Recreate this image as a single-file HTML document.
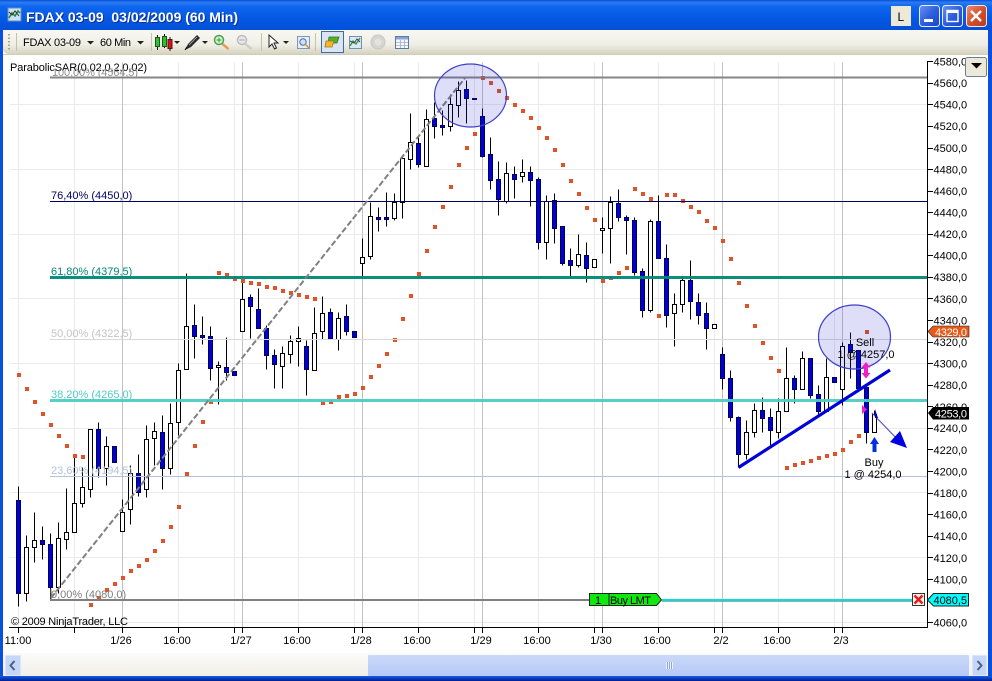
<!DOCTYPE html>
<html lang="en">
<head>
<meta charset="utf-8">
<title>FDAX 03-09 03/02/2009 (60 Min)</title>
<style>
html,body{margin:0;padding:0;background:#fff;width:992px;height:681px;overflow:hidden}
svg{display:block;position:absolute;left:0;top:0}
text{font-family:"Liberation Sans",Arial,sans-serif;font-size:11px;fill:#000}
</style>
</head>
<body>
<svg width="992" height="681" viewBox="0 0 992 681" xmlns="http://www.w3.org/2000/svg">
<defs>
<linearGradient id="tb" x1="0" y1="0" x2="0" y2="1">
<stop offset="0" stop-color="#0a4fd8"/><stop offset=".08" stop-color="#2a7cf4"/><stop offset=".22" stop-color="#0f66ee"/><stop offset=".6" stop-color="#0558e4"/><stop offset="1" stop-color="#0450d8"/>
</linearGradient>
<linearGradient id="tool" x1="0" y1="0" x2="0" y2="1">
<stop offset="0" stop-color="#f8f7f2"/><stop offset=".6" stop-color="#f0efe6"/><stop offset="1" stop-color="#d6d3bf"/>
</linearGradient>
<linearGradient id="btn" x1="0" y1="0" x2="1" y2="1">
<stop offset="0" stop-color="#6d92ee"/><stop offset=".5" stop-color="#2d5fe0"/><stop offset="1" stop-color="#1c44c4"/>
</linearGradient>
<linearGradient id="cls" x1="0" y1="0" x2="1" y2="1">
<stop offset="0" stop-color="#e9917c"/><stop offset=".5" stop-color="#d5512f"/><stop offset="1" stop-color="#b83a1c"/>
</linearGradient>
<linearGradient id="sb" x1="0" y1="0" x2="0" y2="1">
<stop offset="0" stop-color="#fbfbf8"/><stop offset="1" stop-color="#f0efe8"/>
</linearGradient>
<linearGradient id="th" x1="0" y1="0" x2="0" y2="1">
<stop offset="0" stop-color="#cbd9f9"/><stop offset="1" stop-color="#b5c9f6"/>
</linearGradient>
<linearGradient id="bot" x1="0" y1="0" x2="0" y2="1">
<stop offset="0" stop-color="#1a5fe8"/><stop offset=".4" stop-color="#0a40c8"/><stop offset="1" stop-color="#001f8c"/>
</linearGradient>
</defs>

<!-- window frame -->
<rect x="0" y="0" width="992" height="681" fill="#0a50e0"/>
<rect x="0" y="0" width="992" height="30" fill="url(#tb)"/>
<rect x="0" y="676" width="992" height="5" fill="url(#bot)"/>
<rect x="3" y="30" width="985" height="646" fill="#fff"/>

<!-- title icon -->
<rect x="8" y="8" width="13" height="13" fill="#cfe0f4" stroke="#5f8fc0"/>
<path d="M9 18l3-5 3 3 3-5 2 2" fill="none" stroke="#1f8a2f" stroke-width="1.5"/>
<path d="M9 12l3 3 3-4 4 5" fill="none" stroke="#333" stroke-width="1"/>
<!-- title -->
<text x="27" y="23" font-weight="bold" style="font-size:14px;fill:#0a2f9a" textLength="212" lengthAdjust="spacingAndGlyphs" xml:space="preserve">FDAX 03-09  03/02/2009 (60 Min)</text>
<text x="26" y="22" font-weight="bold" style="font-size:14px;fill:#fff" textLength="212" lengthAdjust="spacingAndGlyphs" xml:space="preserve">FDAX 03-09  03/02/2009 (60 Min)</text>

<!-- window buttons -->
<rect x="891" y="6" width="20" height="20" fill="#ece9d8"/>
<text x="897.5" y="21" style="font-size:12px">L</text>
<rect x="919.5" y="5.5" width="20" height="21" rx="3" fill="url(#btn)" stroke="#e8eefc"/>
<rect x="924" y="19" width="9" height="3" fill="#fff"/>
<rect x="942.5" y="5.5" width="20" height="21" rx="3" fill="url(#btn)" stroke="#e8eefc"/>
<rect x="947" y="10.5" width="11" height="11" fill="none" stroke="#fff" stroke-width="1.4"/>
<rect x="947" y="10" width="11" height="3" fill="#fff"/>
<rect x="966.5" y="5.5" width="20" height="21" rx="3" fill="url(#cls)" stroke="#f0e8e4"/>
<path d="M971 11l10 10M981 11l-10 10" stroke="#fff" stroke-width="2.4"/>

<!-- toolbar -->
<path d="M3 30H988V54H9Q3 54 3 48Z" fill="url(#tool)"/>
<path d="M3 54.5H988" stroke="#cfccb8" stroke-width="1"/>
<path d="M9 34v16" stroke="#a8a590" stroke-width="2" stroke-dasharray="1.5 2"/>
<path d="M16.5 33v18M151.5 33v18M261.5 33v18M315.5 33v18" stroke="#c4c1ac"/>
<text x="23" y="46" textLength="58">FDAX 03-09</text>
<path d="M87 41h7l-3.5 3.5z" fill="#222"/>
<text x="100" y="46" textLength="31">60 Min</text>
<path d="M137 41h7l-3.5 3.5z" fill="#222"/>
<!-- candles icon -->
<path d="M157.5 35v15M164.5 34v14M170 37v14" stroke="#111"/>
<rect x="155.5" y="37.5" width="4" height="9" fill="#2fc02f" stroke="#1a5a1a"/>
<rect x="162.5" y="36.5" width="4" height="10" fill="#2fc02f" stroke="#1a5a1a"/>
<rect x="168" y="39.5" width="4" height="9" fill="#d01818" stroke="#601010"/>
<path d="M174 41h6l-3 3z" fill="#222"/>
<!-- pen icon -->
<path d="M185 50l3-6 9-9 3 3-9 9z" fill="#2a2a2a"/><path d="M189 45l8-8" stroke="#999"/><path d="M185 50l2-3" stroke="#000"/>
<path d="M202 41h6l-3 3z" fill="#222"/>
<!-- magnifiers -->
<circle cx="219" cy="40" r="4.500" fill="#dff5df" stroke="#4aa04a" stroke-width="1.500"/>
<path d="M216.500 40h5M219 37.500v5" stroke="#2a9a2a"/>
<path d="M222.500 44l6 5" stroke="#e09a4a" stroke-width="2.400"/>
<circle cx="242" cy="40" r="4.500" fill="#e8e8e8" stroke="#bdbdbd" stroke-width="1.500"/>
<path d="M239.500 40h5" stroke="#aaa"/>
<path d="M245.500 44l6 5" stroke="#ccc" stroke-width="2.400"/>
<!-- cursor -->
<path d="M269 35v12l3-3 2.500 5 2-1-2.500-5h4z" fill="#fff" stroke="#222"/>
<path d="M283 41h6l-3 3z" fill="#222"/>
<!-- properties -->
<rect x="297.500" y="36.500" width="12" height="12" fill="#e8eef8" stroke="#7a97c0"/>
<circle cx="303" cy="42" r="3.200" fill="#cfe0f4" stroke="#4a6ea0"/>
<path d="M305 44l4 4" stroke="#d08a3a" stroke-width="1.500"/>
<!-- highlighted -->
<rect x="321.500" y="31.500" width="22" height="21" fill="#dbe4f4" stroke="#3a6ea5"/>
<path d="M329 37h10l-2 6h-9z" fill="#52b02a" stroke="#2f7a14" stroke-width=".8"/>
<path d="M326 41h8l-2 6h-7z" fill="#f2b62a" stroke="#a87810" stroke-width=".8"/>
<!-- chart -->
<rect x="349.500" y="36.500" width="12" height="12" fill="#dce8f6" stroke="#6f8fb8"/>
<path d="M350 46l3-5 3 3 4-6" fill="none" stroke="#2a9a3a" stroke-width="1.300"/>
<path d="M350 41l4 2 3-4 3 3" fill="none" stroke="#444"/>
<!-- circle -->
<circle cx="378" cy="42" r="7" fill="#d6d6cf" stroke="#c8c8c0"/>
<circle cx="378" cy="42" r="3.500" fill="#e4e4de"/>
<!-- table -->
<rect x="395.500" y="36.500" width="13" height="12" fill="#f6f6fc" stroke="#5a78a8"/>
<rect x="396" y="37" width="12" height="2.500" fill="#8aa5d0"/>
<path d="M396 42.500h12M396 45.500h12M400.500 40v8M404.500 40v8" stroke="#9ab0d0" stroke-width=".8"/>

<!-- grid -->
<g transform="translate(.5,.5)">
<path d="M9 104H927M9 169H927M9 234H927M9 298H927M9 363H927M9 428H927M9 492H927M9 557H927M9 622H927" stroke="#ebebeb" fill="none"/>
<path d="M18 62V627M74 62V627M178 62V627M234 62V627M298 62V627M354 62V627M418 62V627M474 62V627M538 62V627M594 62V627M658 62V627M714 62V627M778 62V627M834 62V627" stroke="#eaeaea" fill="none"/>
<path d="M122 62V627M242 62V627M362 62V627M482 62V627M602 62V627M722 62V627M842 62V627" stroke="#c2c2c2" fill="none"/>

<!-- candle wicks -->
<path stroke="#000" fill="none" d="M18 486V606M26 535V601M34 512V562M42 526V559M50 533V599M58 522V593M66 488V549M74 455V532M82 467V507M90 429V497M98 422V477M106 436V485M122 499V531M130 465V524M138 454V496M146 425V497M154 422V465M162 415V489M170 403V474M178 363V435M186 273V369M194 304V358M202 316V344M210 326V380M218 361V404M226 337V380M242 280V331M250 294V338M258 288V328M266 325V369M274 349V388M282 346V388M290 335V363M298 326V366M306 340V395M314 307V370M322 296V339M330 308V338M338 312V350M346 304V335M362 238V277M370 202V259M378 207V231M386 192V226M394 193V220M402 155V218M410 113V169M418 135V167M426 109V166M434 102V138M442 110V135M450 94V131M458 81V117M466 80V123M482 108V157M490 137V189M498 161V215M506 162V203M514 166V198M522 159V182M530 166V206M538 177V249M546 195V259M554 193V243M562 226V265M570 248V276M578 234V267M586 242V282M602 217V253M610 196V263M618 189V221M626 215V254M634 217V275M642 268V317M650 219V312M658 195V258M666 244V327M674 293V346M682 276V312M690 260V319M698 293V324M706 302V349M722 347V389M730 370V421M738 416V467M746 420V459M754 403V437M762 397V432M770 408V445M778 398V438M786 347V411M794 375V403M802 351V389M810 358V398M818 385V415M826 358V411M842 342V405M850 332V378M858 350V388M866 385V443M874 410V432"/>
<!-- hollow bodies -->
<path stroke="#000" fill="#fff" d="M24 547h4v46h-4zM32 540h4v7h-4zM56 538h4v49h-4zM64 532h4v7h-4zM72 503h4v29h-4zM80 487h4v16h-4zM88 429h4v60h-4zM104 446h4v22h-4zM120 512h4v19h-4zM128 473h4v36h-4zM144 439h4v50h-4zM152 431h4v7h-4zM168 423h4v45h-4zM176 370h4v52h-4zM184 326h4v43h-4zM216 365h4v2h-4zM240 299h4v32h-4zM280 353h4v13h-4zM288 341h4v13h-4zM296 338h4v3h-4zM312 333h4v37h-4zM320 313h4v18h-4zM336 318h4v21h-4zM360 257h4v6h-4zM368 216h4v40h-4zM392 202h4v16h-4zM400 158h4v44h-4zM408 142h4v17h-4zM424 119h4v47h-4zM448 104h4v22h-4zM456 90h4v15h-4zM504 173h4v28h-4zM520 172h4v4h-4zM544 201h4v41h-4zM576 254h4v11h-4zM592 259h4v8h-4zM600 228h4v2h-4zM608 202h4v26h-4zM648 221h4v89h-4zM672 304h4v9h-4zM680 280h4v24h-4zM712 324h4v4h-4zM744 432h4v22h-4zM752 410h4v22h-4zM776 411h4v21h-4zM784 378h4v33h-4zM800 358h4v31h-4zM824 377h4v34h-4zM840 346h4v43h-4zM872 414h4v18h-4z"/>
<!-- filled bodies -->
<path stroke="#00005a" fill="#0000d0" d="M16 500h4v93h-4zM40 540h4v4h-4zM48 544h4v43h-4zM96 429h4v39h-4zM112 446h4v16h-4zM136 473h4v19h-4zM160 432h4v36h-4zM192 325h4v11h-4zM200 335h4v2h-4zM208 336h4v32h-4zM224 367h4v5h-4zM232 371h4v4h-4zM248 297h4v9h-4zM256 309h4v19h-4zM264 328h4v27h-4zM272 355h4v9h-4zM304 346h4v23h-4zM328 312h4v26h-4zM344 316h4v15h-4zM352 331h4v6h-4zM376 217h4v2h-4zM384 217h4v2h-4zM416 143h4v21h-4zM432 118h4v8h-4zM440 125h4v2h-4zM464 89h4v9h-4zM472 98h4v1h-4zM480 116h4v40h-4zM488 154h4v26h-4zM496 179h4v20h-4zM512 174h4v5h-4zM528 172h4v8h-4zM536 179h4v63h-4zM552 200h4v28h-4zM560 226h4v37h-4zM568 260h4v5h-4zM584 255h4v13h-4zM616 203h4v14h-4zM624 217h4v3h-4zM632 220h4v52h-4zM640 271h4v39h-4zM656 221h4v37h-4zM664 258h4v57h-4zM688 280h4v21h-4zM696 302h4v13h-4zM704 313h4v15h-4zM720 354h4v24h-4zM728 378h4v39h-4zM736 417h4v37h-4zM760 410h4v8h-4zM768 417h4v13h-4zM792 378h4v11h-4zM808 358h4v37h-4zM816 394h4v17h-4zM832 377h4v5h-4zM848 344h4v8h-4zM856 350h4v38h-4zM864 387h4v45h-4z"/>
</g>

<!-- Parabolic SAR dots -->
<path stroke="#e2522a" stroke-width="4" stroke-linecap="square" fill="none" d="M19 375h.01M27 389h.01M35 402h.01M43 414h.01M51 425h.01M59 436h.01M67 446h.01M75 456h.01M83 457h.01M91 605h.01M99 598h.01M107 590h.01M115 584h.01M123 578h.01M131 571h.01M139 566h.01M147 560h.01M155 551h.01M163 541h.01M171 527h.01M179 507h.01M187 474h.01M195 446h.01M203 422h.01M211 402h.01M219 273h.01M227 275h.01M235 279h.01M243 281h.01M251 283h.01M259 284h.01M267 287h.01M275 288h.01M283 291h.01M291 293h.01M299 295h.01M307 297h.01M315 299h.01M323 403h.01M331 402h.01M339 397h.01M347 396h.01M355 394h.01M363 388h.01M371 377h.01M379 366h.01M387 354h.01M395 340h.01M403 319h.01M411 296h.01M419 274h.01M427 251h.01M435 227h.01M443 207h.01M451 187h.01M459 165h.01M467 148h.01M475 134h.01M483 78h.01M491 83h.01M499 91h.01M507 98h.01M515 105h.01M523 111h.01M531 118h.01M539 128h.01M547 138h.01M555 150h.01M563 165h.01M571 181h.01M579 194h.01M587 208h.01M595 220h.01M603 281h.01M611 278h.01M619 273h.01M627 268h.01M635 189h.01M643 194h.01M651 199h.01M659 316h.01M667 195h.01M675 195h.01M683 201h.01M691 207h.01M699 212h.01M707 221h.01M715 228h.01M723 241h.01M731 259h.01M739 283h.01M747 306h.01M755 326h.01M763 343h.01M771 358h.01M779 371h.01M787 468h.01M795 465h.01M803 463h.01M811 461h.01M819 458h.01M827 456h.01M835 454h.01M843 450h.01M851 442h.01M859 436h.01M867 332h.01"/>

<!-- fib lines -->
<path d="M50 77.500H927" stroke="#808080" stroke-width="2" opacity=".95"/>
<path d="M50 201.500H927" stroke="#000060" stroke-width="1"/>
<path d="M50 277.500H927" stroke="#008878" stroke-width="3" opacity=".95"/>
<path d="M50 339.500H927" stroke="#d8d8d8" stroke-width="1"/>
<path d="M50 400.500H927" stroke="#4fcdc4" stroke-width="3" opacity=".95"/>
<path d="M50 476.500H927" stroke="#b4c0dc" stroke-width="1"/>
<path d="M50 600H590" stroke="#808080" stroke-width="2"/>
<path d="M51 598L465 78" stroke="#808080" stroke-width="2" stroke-dasharray="6 2.500" fill="none"/>
<path d="M51 589V600" stroke="#808080" stroke-width="1"/>

<!-- ellipses -->
<ellipse cx="470.500" cy="95.500" rx="36" ry="31.500" fill="#2020d0" fill-opacity=".15" stroke="#4040c8" stroke-width="1.200"/>
<ellipse cx="854.500" cy="337" rx="36" ry="32" fill="#2020d0" fill-opacity=".15" stroke="#4040c8" stroke-width="1.200"/>

<!-- labels -->
<text x="10" y="71" textLength="137">ParabolicSAR(0,02,0,2,0,02)</text>
<text x="52" y="76" style="fill:#909090" textLength="86">100,00% (4564,5)</text>
<text x="51" y="199" style="fill:#000060">76,40% (4450,0)</text>
<text x="51" y="275" style="fill:#008878">61,80% (4379,5)</text>
<text x="51" y="337" style="fill:#c4c4c4">50,00% (4322,5)</text>
<text x="51" y="398" style="fill:#4fcdc4">38,20% (4265,0)</text>
<text x="51" y="474" style="fill:#b4c0dc">23,60% (4194,5)</text>
<text x="51" y="598" style="fill:#808080">0,00% (4080,0)</text>
<text x="11" y="625" textLength="117">© 2009 NinjaTrader, LLC</text>

<!-- trend & arrows -->
<path d="M738.500 467.500L890 370" stroke="#0000d8" stroke-width="3.200" fill="none"/>
<path d="M872 413L899 441" stroke="#5a5ac0" stroke-width="1.200" fill="none"/>
<path d="M907 448L890 442L900 431Z" fill="#0000e0"/>
<path d="M876 409v9h3z" fill="#0000e0" transform="translate(-1,0)"/>
<path d="M870 444l4.500-7 4.500 7h-2.500v8h-4v-8z" fill="#0030e0"/>
<path d="M862 405v9l5-4.500z" fill="#f020d0"/>
<path d="M866 362l4.500 5.500h-2.500v5.500h2.500l-4.500 5.500-4.500-5.500h2.500v-5.500h-2.500z" fill="#f020c8"/>

<text x="865" y="346" text-anchor="middle">Sell</text>
<text x="866" y="358" text-anchor="middle">1 @ 4257,0</text>
<text x="874" y="466" text-anchor="middle">Buy</text>
<text x="873" y="478" text-anchor="middle">1 @ 4254,0</text>

<!-- bottom time axis -->
<path d="M9 627.500H927.500V61" stroke="#000" fill="none"/>
<path stroke="#000" fill="none" d="M18.500 627v6M74.500 627v6M122.500 627v6M178.500 627v6M234.500 627v6M242.500 627v6M298.500 627v6M354.500 627v6M362.500 627v6M418.500 627v6M474.500 627v6M482.500 627v6M538.500 627v6M594.500 627v6M602.500 627v6M658.500 627v6M714.500 627v6M722.500 627v6M778.500 627v6M834.500 627v6M842.500 627v6"/>
<g text-anchor="middle">
<text x="18" y="644">11:00</text><text x="121" y="644">1/26</text><text x="177" y="644">16:00</text><text x="241" y="644">1/27</text><text x="297" y="644">16:00</text><text x="361" y="644">1/28</text><text x="417" y="644">16:00</text><text x="481" y="644">1/29</text><text x="537" y="644">16:00</text><text x="601" y="644">1/30</text><text x="657" y="644">16:00</text><text x="721" y="644">2/2</text><text x="777" y="644">16:00</text><text x="841" y="644">2/3</text>
</g>

<!-- price axis -->
<path stroke="#000" fill="none" d="M927 61.500h6M927 83.500h6M927 104.500h6M927 126.500h6M927 148.500h6M927 169.500h6M927 191.500h6M927 212.500h6M927 234.500h6M927 255.500h6M927 277.500h6M927 298.500h6M927 320.500h6M927 342.500h6M927 363.500h6M927 385.500h6M927 406.500h6M927 428.500h6M927 449.500h6M927 471.500h6M927 493.500h6M927 514.500h6M927 536.500h6M927 557.500h6M927 579.500h6M927 600.500h6M927 622.500h6"/>
<g>
<text x="933.500" y="65.500">4580,0</text><text x="933.500" y="87">4560,0</text><text x="933.500" y="108.500">4540,0</text><text x="933.500" y="130">4520,0</text><text x="933.500" y="152">4500,0</text><text x="933.500" y="173.500">4480,0</text><text x="933.500" y="195">4460,0</text><text x="933.500" y="216.500">4440,0</text><text x="933.500" y="238">4420,0</text><text x="933.500" y="259.500">4400,0</text><text x="933.500" y="281">4380,0</text><text x="933.500" y="303">4360,0</text><text x="933.500" y="324.500">4340,0</text><text x="933.500" y="346">4320,0</text><text x="933.500" y="367.500">4300,0</text><text x="933.500" y="389">4280,0</text><text x="933.500" y="411">4260,0</text><text x="933.500" y="432">4240,0</text><text x="933.500" y="454">4220,0</text><text x="933.500" y="475.500">4200,0</text><text x="933.500" y="497">4180,0</text><text x="933.500" y="518.500">4160,0</text><text x="933.500" y="540">4140,0</text><text x="933.500" y="562">4120,0</text><text x="933.500" y="583.500">4100,0</text><text x="933.500" y="626.500">4060,0</text>
</g>

<!-- price tags -->
<path d="M928 331.500l5-5.500h36v11h-36z" fill="#e85a18" stroke="#222" stroke-width=".6"/>
<text x="935" y="336" style="fill:#fff" textLength="32">4329,0</text>
<path d="M928 413l5-6h36v12.500h-36z" fill="#000"/>
<text x="935" y="417.500" style="fill:#fff" textLength="32">4253,0</text>

<!-- order line -->
<path d="M662 600H912" stroke="#00e0e0" stroke-width="2"/>
<path d="M662 601.500H912" stroke="#707070" stroke-width="1" opacity=".6"/>
<path d="M589.500 593.500H656.500L661.500 600L656.500 605.500H589.500Z" fill="#10e810" stroke="#222"/>
<path d="M609 593.500V605.500" stroke="#222"/>
<text x="595" y="604">1</text>
<text x="610" y="604" textLength="41">Buy LMT</text>
<rect x="912.500" y="593.500" width="12" height="12" fill="#fff0e8" stroke="#333"/>
<path d="M914.500 595.500l8 8M922.500 595.500l-8 8" stroke="#e81818" stroke-width="2.400"/>
<path d="M927.500 600l6-6.500h35v12.500h-35z" fill="#00ffff" stroke="#222"/>
<text x="933.500" y="604" textLength="33.500">4080,5</text>

<!-- dropdown -->
<rect x="965.500" y="57.500" width="21" height="19" rx="2" fill="#ece9d8" stroke="#6b7f98"/>
<path d="M971 63h11l-5.500 5.500z" fill="#000"/>

<!-- scrollbar -->
<rect x="3" y="653" width="985" height="23" fill="url(#sb)"/>
<rect x="5.500" y="655.500" width="15" height="20" rx="1" fill="#c5d6f9" stroke="#dce6fb"/>
<path d="M14.500 661l-4 4.500 4 4.500" fill="none" stroke="#4d6185" stroke-width="2"/>
<rect x="368" y="655" width="601" height="21" rx="1" fill="url(#th)"/>
<path d="M666.500 662v7M668.500 662v7M670.500 662v7M672.500 662v7" stroke="#eef3fd"/>
<path d="M667.500 662v7M669.500 662v7M671.500 662v7" stroke="#8ca6d8"/>
<rect x="972.500" y="655.500" width="14" height="20" rx="1" fill="#c5d6f9" stroke="#dce6fb"/>
<path d="M977.500 661l4 4.500-4 4.500" fill="none" stroke="#4d6185" stroke-width="2"/>
</svg>
</body>
</html>
